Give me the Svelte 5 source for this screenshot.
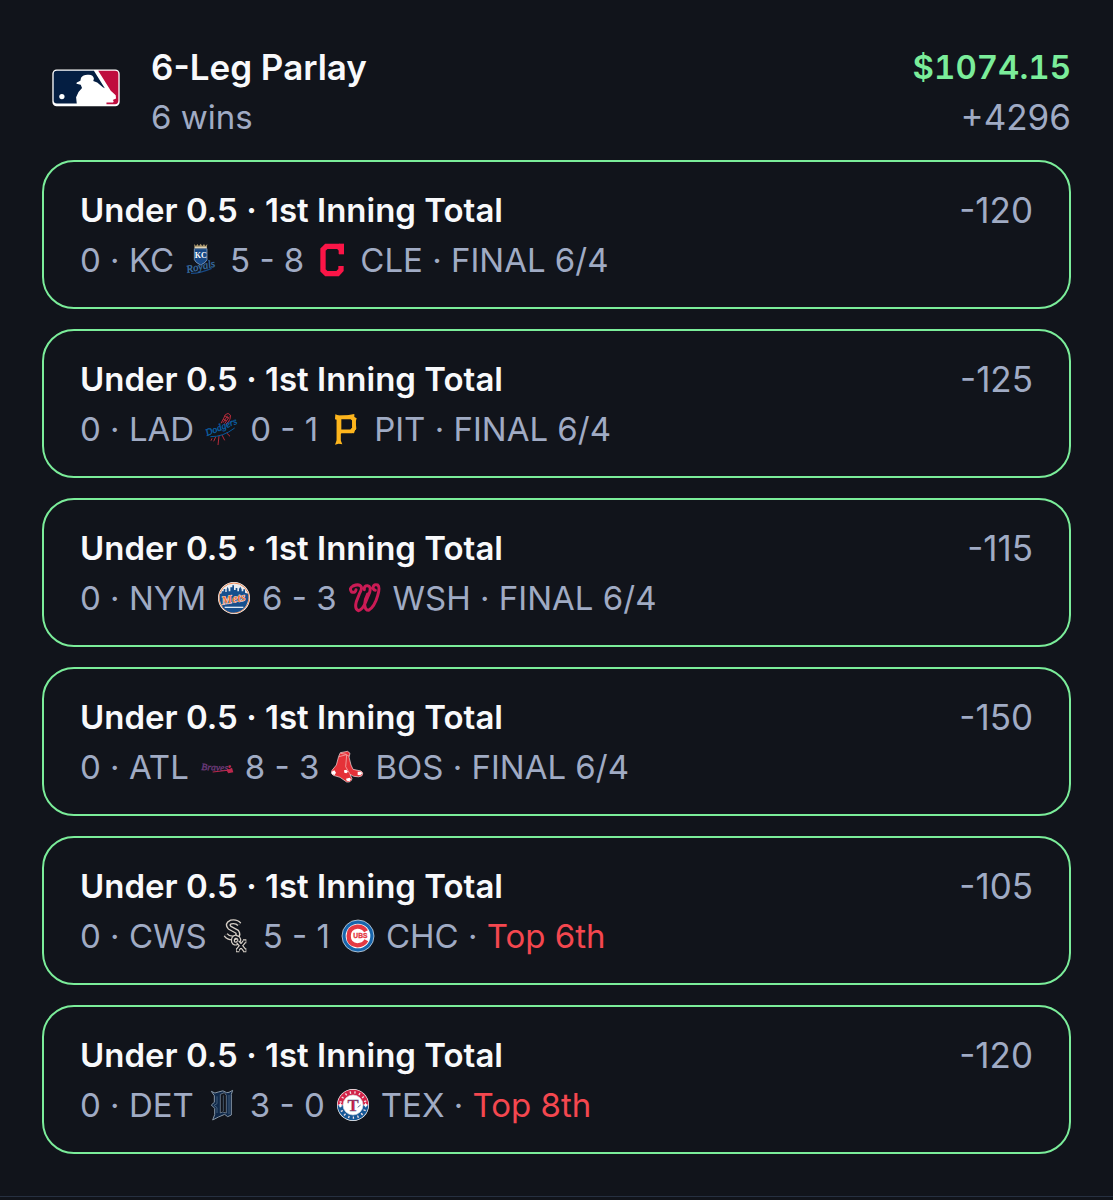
<script>
  const parlay = { title: '6-Leg Parlay', record: '6 wins', payout: '$1074.15', odds: '+4296' };

  const market = 'Under 0.5 · 1st Inning Total';

  const legs = [
    { away: 'KC', home: 'CLE', score: '5 - 8', odds: '-120', status: 'FINAL 6/4', live: false },
    { away: 'LAD', home: 'PIT', score: '0 - 1', odds: '-125', status: 'FINAL 6/4', live: false },
    { away: 'NYM', home: 'WSH', score: '6 - 3', odds: '-115', status: 'FINAL 6/4', live: false },
    { away: 'ATL', home: 'BOS', score: '8 - 3', odds: '-150', status: 'FINAL 6/4', live: false },
    { away: 'CWS', home: 'CHC', score: '5 - 1', odds: '-105', status: 'Top 6th', live: true },
    { away: 'DET', home: 'TEX', score: '3 - 0', odds: '-120', status: 'Top 8th', live: true }
  ];

  // every team logo is drawn in its own 102 x 102 area
  const viewBoxes = {
    KC: '24 22 102 102',
    CLE: '416 24 102 102',
    LAD: '28 20 102 102',
    PIT: '406 20 102 102',
    NYM: '32 23 102 102',
    WSH: '425 24 102 102',
    ATL: '23 22 102 102',
    BOS: '415 23 102 102',
    CWS: '22 24 102 102',
    CHC: '397 24 102 102',
    DET: '25 23 102 102',
    TEX: '418 24 102 102'
  };
</script>

{#snippet teamLogo(team)}
  <svg class="team-logo" viewBox={viewBoxes[team]} aria-hidden="true">
    {#if team === 'KC'}
      <path d="M53 38 L51 25 L57 31 L61 25 L66 31 L71 24 L76 31 L81 25 L85 31 L91 25 L89 38 Z" fill="#a8946a" />
      <path d="M53 35 H89" stroke="#e8dfc8" stroke-width="3" />
      <path d="M52 39 H90 V72 Q87 81 71 88 Q55 81 52 72 Z" fill="#174885" stroke="#9fb8d4" stroke-width="2" />
      <text x="71" y="68" text-anchor="middle" font-family="Liberation Serif, serif" font-weight="700" font-size="24" fill="#fff">KC</text>
      <path d="M42 113 Q66 114 104 98" stroke="#174885" stroke-width="4" fill="none" />
      <text x="31" y="112" transform="rotate(-13 31 112)" font-family="Liberation Serif, serif" font-style="italic" font-size="32" fill="#4a80b4" stroke="#2b6097" stroke-width="1">Royals</text>
    {:else if team === 'CLE'}
      <path d="M495 57 V44 L486 34 H450 L440 44 V106 L450 116 H484 L494 105 V93" fill="none" stroke="#fb1547" stroke-width="16" />
      <path d="M488 26 H503 V58 H488 Z" fill="#fb1547" />
    {:else if team === 'LAD'}
      <g fill="none" stroke="#b52b3a" stroke-width="3">
        <path d="M76 54 Q84 40 89 28 Q98 20 104 29 Q107 42 91 58 M82 52 L96 31 M87 55 L101 34 M87 31 L99 39 M82 41 L93 47" />
        <path d="M49 99 L46 106 M60 95 L54 108 M70 92 L67 119 M79 89 L87 105 M93 83 L103 93" />
      </g>
      <text x="34" y="92" transform="rotate(-22 34 92)" font-family="Liberation Serif, serif" font-style="italic" font-size="29" fill="#0b62a8" stroke="#0b62a8" stroke-width="1">Dodgers</text>
      <path d="M44 94 Q82 95 117 68" fill="none" stroke="#075a9d" stroke-width="3" />
    {:else if team === 'PIT'}
      <path d="M435 35 V110 M431 36 H473 L481 43 V70 L473 78 H440" fill="none" stroke="#fdb51d" stroke-width="11" />
      <path d="M425 27 L437 31 L461 30 L482 26 L482 35 L489 39 L486 49 L488 70 L484 75 L481 84 L473 83 L471 72 L476 67 L475 43 L469 38 H443 V68 L443 84 L441 86 V105 L446 117 L435 115 L424 118 L429 105 V43 L424 42 Z" fill="#fdb51d" />
    {:else if team === 'NYM'}
      <circle cx="83" cy="74" r="48" fill="#fff" />
      <circle cx="83" cy="74" r="45" fill="#e9edf1" stroke="#ed8953" stroke-width="3" />
      <path d="M41 62 L46 60 V54 H52 V47 H57 V56 H61 V48 L64 40 L67 48 V54 H72 V42 H78 V36 H83 V50 H88 V44 H93 V54 H98 V47 L102 40 L106 48 V54 H111 V48 H116 V58 L125 61 Q130 84 114 104 Q100 118 83 118 Q63 118 50 103 Q37 84 41 62 Z" fill="#174f8d" />
      <path d="M55 102 H111" fill="none" stroke="#dfe8f2" stroke-width="4" />
      <text x="48" y="94" transform="rotate(-10 48 94)" font-family="Liberation Serif, serif" font-style="italic" font-weight="700" font-size="36" fill="#f37334" stroke="#fff" stroke-width="2" paint-order="stroke">Mets</text>
    {:else if team === 'WSH'}
      <path d="M436 57 Q427 46 440 39 Q459 31 465 42 Q467 50 459 63 L450 86 Q444 108 456 113 Q469 110 478 87 L490 58 Q495 40 484 38 Q473 37 474 50 M484 63 Q476 78 475 94 Q476 112 487 112 Q505 101 514 68 Q522 42 514 36 Q503 32 500 43 Q500 51 507 52 M436 57 Q447 61 449 50" fill="none" stroke="#ca1b55" stroke-width="9" stroke-linecap="round" stroke-linejoin="round" />
    {:else if team === 'ATL'}
      <text x="27" y="82" transform="rotate(2 27 82)" font-family="Liberation Serif, serif" font-style="italic" font-size="29" fill="#5b3f8c" stroke="#7a3a74" stroke-width="1">Braves</text>
      <path d="M61 88 L105 83" stroke="#bd284d" stroke-width="3" />
      <path d="M104 78 L110 80 L119 75 L123 89 L108 92 L104 86 Z M108 69 L114 67 L117 73 L110 77 Z" fill="#bc284c" />
    {:else if team === 'BOS'}
      <path d="M441 42 L446 31 L468 27 L475 33 L472 44 L478 68 L484 81 L508 86 Q517 91 511 100 Q504 106 486 102 L475 96 L481 109 Q478 121 465 119 L445 105 L425 99 Q415 94 421 84 L434 68 Z" fill="#e53138" stroke="#f7e7e5" stroke-width="2" />
      <path d="M442 43 L464 37 L473 42 M447 33 L464 36 M465 38 L462 73 L474 94" fill="none" stroke="#f4c9c6" stroke-width="2" />
      <path d="M420 88 L428 84 L433 91 L429 98 L421 96 Z M457 84 L464 82 L469 88 L464 93 L458 91 Z M463 109 L474 106 L478 111 L473 117 L465 115 Z M498 88 L508 88 L512 93 L506 99 L498 98 Z" fill="#fff" />
    {:else if team === 'CWS'}
      <g fill="none" stroke-linejoin="round">
        <path d="M86 40 Q78 30 61 33 Q47 39 57 50 L79 62 Q87 73 73 80 Q55 84 45 71" stroke="#d7d0c7" stroke-width="15" />
        <path d="M86 40 Q78 30 61 33 Q47 39 57 50 L79 62 Q87 73 73 80 Q55 84 45 71" stroke="#11141b" stroke-width="7" />
        <path d="M75 77 Q65 80 67 92 Q71 101 80 96 Q90 89 83 80 Z" stroke="#d7d0c7" stroke-width="12" />
        <path d="M75 77 Q65 80 67 92 Q71 101 80 96 Q90 89 83 80 Z" stroke="#11141b" stroke-width="5" />
        <path d="M81 92 L102 118 M102 91 L80 118 M97 91 H107 M76 118 H86 M97 118 H107" stroke="#d7d0c7" stroke-width="12" />
        <path d="M81 92 L102 118 M102 91 L80 118 M98 91 H105 M78 118 H85 M99 118 H105" stroke="#11141b" stroke-width="5" />
      </g>
    {:else if team === 'CHC'}
      <circle cx="448" cy="75" r="48" fill="#1765ac" stroke="#f2f4f7" stroke-width="2" />
      <circle cx="448" cy="75" r="37" fill="#fff" />
      <path d="M472 61 Q464 46 445 47 Q420 50 420 75 Q420 101 446 103 Q465 103 473 88" fill="none" stroke="#e43943" stroke-width="13" />
      <text x="434" y="82" font-family="Liberation Sans, sans-serif" font-weight="700" font-size="20" fill="#e43943" stroke="#e43943" stroke-width="1">UBS</text>
    {:else if team === 'DET'}
      <g fill="none" stroke-linejoin="round">
        <path d="M44 33 Q55 42 65 35 Q80 27 90 37 L97 36 L108 30 L104 42 V104 L93 109 L84 102 Q66 109 48 119 L54 103 V84 L44 74 L53 66 V46 Z" fill="#10294a" stroke="#8796a5" stroke-width="3" />
        <path d="M71 42 L83 37 L89 45 V98 L78 95 L71 98 Z" fill="#11141b" stroke="#8796a5" stroke-width="2" />
        <path d="M80 45 V92 M61 48 V70 L52 75 L61 82 V98 M97 44 V101" stroke="#5e7892" stroke-width="2" />
      </g>
    {:else if team === 'TEX'}
      <circle cx="469" cy="75" r="48" fill="#fff" />
      <path d="M423 75 A46 46 0 0 1 515 75 Z" fill="#d32348" />
      <path d="M423 75 A46 46 0 0 0 515 75 Z" fill="#165896" />
      <circle cx="469" cy="75" r="38" fill="none" stroke="#f0dfe5" stroke-width="7" stroke-dasharray="4 10" />
      <circle cx="469" cy="75" r="30" fill="#fff" stroke="#d8dfe9" stroke-width="2" />
      <path d="M424 75 L429 72 L431 67 L433 72 L438 75 L433 78 L431 83 L429 78 Z M514 75 L509 72 L507 67 L505 72 L500 75 L505 78 L507 83 L509 78 Z" fill="#fff" />
      <text x="469" y="92" text-anchor="middle" font-family="Liberation Serif, serif" font-weight="700" font-size="50" fill="#d51f43" stroke="#285c91" stroke-width="1">T</text>
      <path d="M483 82 L492 75" stroke="#66799a" stroke-width="3" />
    {/if}
  </svg>
{/snippet}

<main class="slip">
  <header class="slip-header">
    <div class="league">
      <svg class="league-logo" viewBox="65 86 206 114" role="img" aria-label="MLB">
        <rect x="66" y="87" width="204" height="111" rx="13" fill="#fff" />
        <path d="M80 91 H192 L225 144 L219 141 L202 126 L190 122 L192 115 Q190 103 177 103 Q160 101 153 112 L151 121 L140 126 L139 130 L152 133 L156 143 Q144 153 138 171 L140 190 H80 Q70 190 70 181 V101 Q70 91 80 91 Z" fill="#041e42" />
        <path d="M205 91 H256 Q266 91 266 101 V181 Q266 192 256 192 H230 V187 H250 L252 183 L249 179 L259 175 L258 165 L243 151 Z" fill="#bf0d3e" />
        <circle cx="95" cy="169" r="8" fill="#fff" />
      </svg>
    </div>
    <div class="summary">
      <h1>{parlay.title}</h1>
      <p class="record muted">{parlay.record}</p>
    </div>
    <div class="totals">
      <p class="payout">{parlay.payout}</p>
      <p class="muted">{parlay.odds}</p>
    </div>
  </header>

  <ul class="legs">
    {#each legs as leg (leg.away)}
      <li class="leg">
        <div class="leg-info">
          <h2>{market}</h2>
          <p class="game muted">
            <span>0 · {leg.away}</span>
            {@render teamLogo(leg.away)}
            <span>{leg.score}</span>
            {@render teamLogo(leg.home)}
            <span>{leg.home} · <span class:live={leg.live}>{leg.status}</span></span>
          </p>
        </div>
        <p class="muted">{leg.odds}</p>
      </li>
    {/each}
  </ul>
</main>

<style>
  :global(body) {
    margin: 0;
    background: #11141b;
  }

  .slip {
    padding: 42px;
    border-bottom: 1px solid #263041;
    font-family: Inter, 'Liberation Sans', sans-serif;
    font-size: 35px;
    line-height: 50px;
    color: #f8f9fb;
  }

  h1, h2, p {
    margin: 0;
    font-size: 35px;
    font-weight: 400;
  }

  h1, h2, .payout {
    font-weight: 600;
  }

  h2, .game, .record, .payout {
    font-size: 33px;
  }

  .muted { color: #a0abc4; }
  .live { color: #f4474f; }

  .slip-header {
    display: flex;
    gap: 21px;
    margin-bottom: 18px;
  }

  .league {
    display: flex;
    align-items: center;
    justify-content: center;
    width: 88px;
    height: 91px;
  }

  .league-logo {
    width: 68px;
    height: 38px;
  }

  .summary { flex: 1; }
  .totals { text-align: right; }

  .payout {
    color: #7bed9a;
    font-variant-numeric: tabular-nums;
  }

  .legs {
    display: flex;
    flex-direction: column;
    gap: 20px;
    margin: 0;
    padding: 0;
    list-style: none;
  }

  .leg {
    display: flex;
    justify-content: space-between;
    padding: 23px 36px 22px;
    border: 2px solid #7bed9a;
    border-radius: 32px;
  }

  .game {
    display: flex;
    align-items: center;
    gap: 11px;
  }

  .team-logo {
    width: 34px;
    height: 34px;
  }
</style>
